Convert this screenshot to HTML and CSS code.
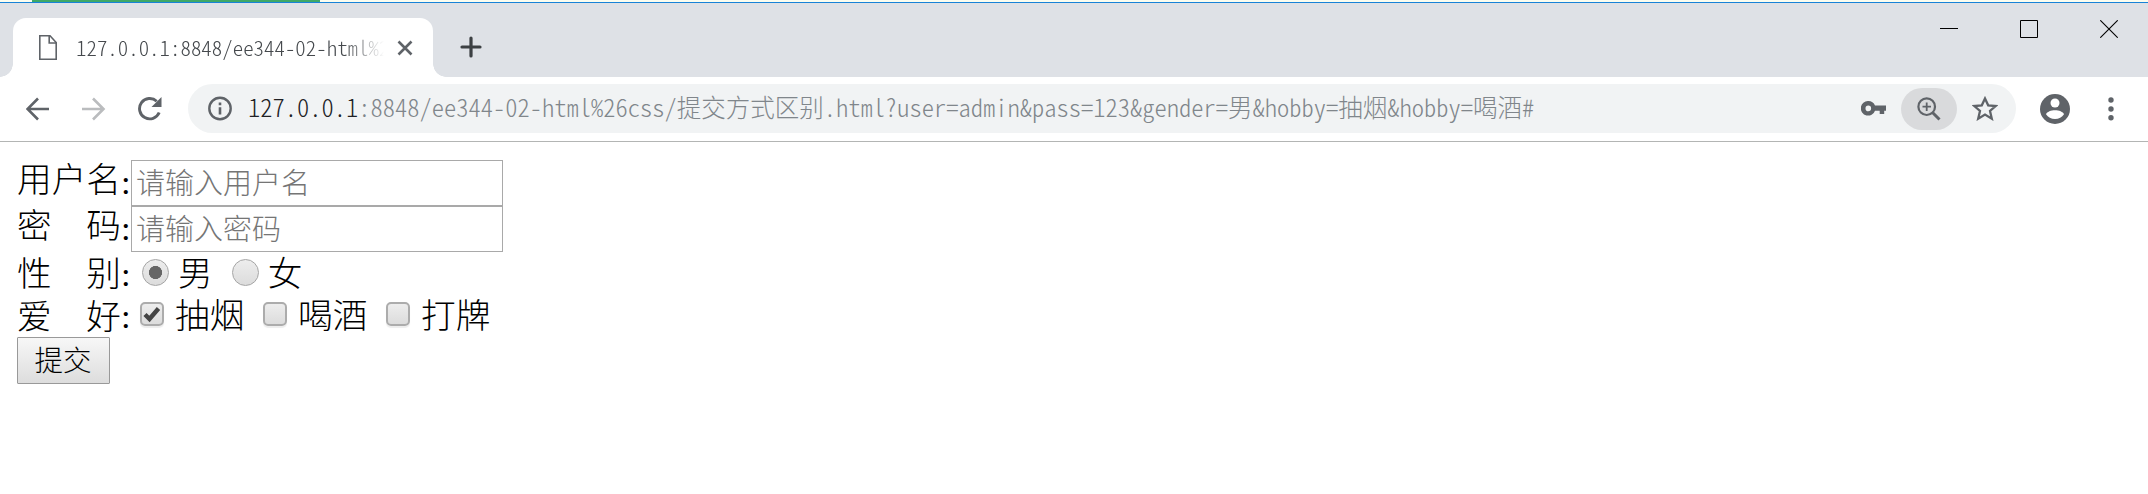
FILE: index.html
```html
<!DOCTYPE html>
<html lang="zh-CN">
<head>
<meta charset="utf-8">
<title>提交方式区别</title>
<link rel="stylesheet" href="styles.css">
</head>
<body>
<div class="backdrop"><div class="backdrop-accent"></div></div>
<header class="titlebar">
  <div class="tab">
    <svg class="tab-page" width="18" height="25" viewBox="0 0 18 25" fill="none" stroke="#5f6368" stroke-width="1.6"><path d="M.8.8H11L17.2 7.500V24.200H.8Z"/><path d="M10.200 1V8H17"/></svg>
    <span class="tab-title">127.0.0.1:8848/ee344-02-html%2</span>
    <svg class="tab-close" width="16" height="16" viewBox="0 0 16 16" stroke="#5f6368" stroke-width="2.600"><path d="M1.500 1.500 14.500 14.500M14.500 1.500 1.500 14.500"/></svg>
  </div>
  <svg class="new-tab" width="22" height="22" viewBox="0 0 22 22" stroke="#3c4043" stroke-width="3.200" stroke-linecap="round"><path d="M11 2V20M2 11H20"/></svg>
  <div class="window-buttons">
    <svg width="18" height="18" viewBox="0 0 18 18" stroke="#000"><path d="M0 8.500H18"/></svg>
    <svg width="18" height="18" viewBox="0 0 18 18" stroke="#000" fill="none"><path d="M.5.5H17.500V17.500H.5Z"/></svg>
    <svg width="18" height="18" viewBox="0 0 18 18" stroke="#000" stroke-width="1.100"><path d="M.3.3 17.700 17.700M17.700.3.3 17.700"/></svg>
  </div>
</header>
<nav class="toolbar">
  <svg class="back" width="24" height="24" viewBox="0 0 24 24" fill="none" stroke="#5f6368" stroke-width="2.600"><path d="M23 12H2M12 1.500 1.500 12 12 22.500"/></svg>
  <svg class="forward" width="24" height="24" viewBox="0 0 24 24" fill="none" stroke="#babcbe" stroke-width="2.600"><path d="M0 12H21M11 1.500 21.500 12 11 22.500"/></svg>
  <svg class="reload" width="26" height="25" viewBox="0 0 26 25"><path d="M22.200 16.500A10.200 10.200 0 1 1 19.700 5.200" fill="none" stroke="#5f6368" stroke-width="2.900"/><path d="M24.500 1V11H14.500Z" fill="#5f6368"/></svg>
  <div class="omnibox">
    <svg class="info" width="25" height="25" viewBox="0 0 25 25"><circle cx="12" cy="12.500" r="10.700" fill="none" stroke="#5f6368" stroke-width="2.400"/><path d="M10.700 11.300H13.300V18.500H10.700ZM10.700 6.500H13.300V9.200H10.700Z" fill="#5f6368"/></svg>
    <span class="url"><span class="host">127.0.0.1</span>:8848/ee344-02-html%26css/提交方式区别.html?user=admin&amp;pass=123&amp;gender=男&amp;hobby=抽烟&amp;hobby=喝酒#</span>
    <svg class="key" width="25" height="15" viewBox="0 0 25 15"><path d="M7.300 0A7.300 7.300 0 0 1 14 4.600H25V9.700H23.200V13H18.700V9.700H14A7.300 7.300 0 1 1 7.300 0ZM7.300 4.600A2.800 2.800 0 1 0 7.300 10.200 2.800 2.800 0 0 0 7.300 4.600Z" fill="#5f6368"/></svg>
    <div class="zoom-chip"><svg width="24" height="24" viewBox="0 0 24 24" fill="none" stroke="#5f6368"><circle cx="9.700" cy="9.700" r="8.300" stroke-width="2.200"/><path d="M9.700 5.500V14M5.500 9.700H14" stroke-width="1.800"/><path d="M15.500 15.500 22.500 22.500" stroke-width="3"/></svg></div>
    <svg class="star" width="26" height="25" viewBox="0 0 26 25" fill="none" stroke="#5f6368" stroke-width="2.300"><path d="M13 2.500 16.200 9.300 23.700 10 18 15 19.800 22.700 13 18.600 6.200 22.700 8 15 2.300 10 9.800 9.300Z"/></svg>
  </div>
  <svg class="avatar" width="30" height="30" viewBox="0 0 30 30"><circle cx="15" cy="15" r="15" fill="#5f6368"/><circle cx="15" cy="9" r="4.500" fill="#fff"/><path d="M6 20.300C7 17.800 11 16.300 15 16.300S23 17.800 24 20.300C22 23.300 18.800 25 15 25S8 23.300 6 20.300Z" fill="#fff"/></svg>
  <svg class="menu" width="6" height="24" viewBox="0 0 6 24" fill="#5f6368"><circle cx="3" cy="3" r="2.700"/><circle cx="3" cy="12" r="2.700"/><circle cx="3" cy="20.800" r="2.700"/></svg>
</nav>
<form class="form">
  <div class="row field-row"><span class="label"><i>用</i><i>户</i><i>名</i></span><span class="colon">:</span><input class="field" type="text" placeholder="请输入用户名"></div>
  <div class="row field-row"><span class="label"><i>密</i><i>码</i></span><span class="colon">:</span><input class="field" type="password" placeholder="请输入密码"></div>
  <div class="row gender-row"><span class="label"><i>性</i><i>别</i></span><span class="colon">:</span>
    <label class="choice male"><input class="radio" type="radio" name="gender" checked><span class="choice-text">男</span></label>
    <label class="choice female"><input class="radio" type="radio" name="gender"><span class="choice-text">女</span></label>
  </div>
  <div class="row hobby-row"><span class="label"><i>爱</i><i>好</i></span><span class="colon">:</span>
    <label class="choice hobby"><span class="check"><svg width="18" height="18" viewBox="0 0 18 18"><path d="M2 9.500 6.500 14 15.500 3.500" fill="none" stroke="#444" stroke-width="4.400"/></svg></span><span class="choice-text">抽烟</span></label>
    <label class="choice hobby"><span class="check"></span><span class="choice-text">喝酒</span></label>
    <label class="choice hobby"><span class="check"></span><span class="choice-text">打牌</span></label>
  </div>
  <button class="submit" type="button">提交</button>
</form>
</body>
</html>
```
FILE: styles.css
```css
* { box-sizing: border-box; }
body {
  margin: 0;
  height: 494px;
  overflow: hidden;
  background: #fff;
  color: #000;
  font-family: "Noto Sans CJK SC", sans-serif;
  font-weight: 300;
}
svg { display: block; flex: none; }

/* Strip of the window behind the browser */
.backdrop { height: 3px; background: #fbfdf0; border-bottom: 1px solid #1883d7; }
.backdrop-accent { width: 288px; height: 2px; margin-left: 32px; background: #3fa867; }

.titlebar { display: flex; height: 74px; padding-left: 13px; background: #dee1e6; }
.tab {
  position: relative;
  display: flex;
  align-items: center;
  width: 420px;
  height: 59px;
  margin-top: 15px;
  padding-left: 26px;
  border-radius: 13px 13px 0 0;
  background: #fff;
}
.tab::before, .tab::after {
  content: "";
  position: absolute;
  bottom: 0;
  width: 13px;
  height: 13px;
}
.tab::before { right: 100%; background: radial-gradient(circle at 0 0, transparent 12.5px, #fff 13px); }
.tab::after { left: 100%; background: radial-gradient(circle at 100% 0, transparent 12.5px, #fff 13px); }
.tab-title {
  width: 314px;
  margin: -2px 0 0 19px;
  white-space: nowrap;
  font-size: 20.9px;
  line-height: 30px;
  color: #45494d;
  font-feature-settings: "hwid";
  -webkit-mask-image: linear-gradient(90deg, #000 268px, transparent 308px);
  mask-image: linear-gradient(90deg, #000 268px, transparent 308px);
}
.tab-close { margin-left: 7px; }
.new-tab { margin: 33px 0 0 27px; }
.window-buttons { display: flex; gap: 62px; margin: 17px 30px 0 auto; }

.toolbar {
  display: flex;
  align-items: center;
  height: 65px;
  padding: 0 34px 1px 26px;
  border-bottom: 1px solid #b3b5b4;
}
.forward { margin-left: 32px; }
.reload { margin-left: 31px; }
.omnibox {
  display: flex;
  align-items: center;
  width: 1829px;
  height: 49px;
  margin-left: 25px;
  padding: 0 18px 0 20px;
  border-radius: 25px;
  background: #f1f3f4;
}
.url {
  margin: -3px 0 0 15px;
  white-space: nowrap;
  font-size: 24.5px;
  line-height: 36px;
  color: #80868b;
  font-feature-settings: "hwid";
}
.host { color: #202124; }
.key { margin-left: auto; }
.zoom-chip {
  display: flex;
  align-items: center;
  justify-content: center;
  width: 56px;
  height: 42px;
  margin-left: 15px;
  border-radius: 21px;
  background: #d9dadc;
}
.star { margin-left: 15px; }
.avatar { margin-left: 24px; }
.menu { margin-left: 38px; }

.form { padding: 18px 17px; font-size: 34.67px; }
.row { display: flex; align-items: center; white-space: nowrap; line-height: 36px; }
.field-row { height: 46px; }
.gender-row { height: 45px; }
.hobby-row { height: 40px; }
.label { display: flex; justify-content: space-between; width: 104px; margin-top: -12px; }
.gender-row .label { margin-top: -8px; }
.hobby-row .label { margin-top: -6px; }
.label i { font-style: normal; }
.colon { width: 10px; margin-top: -2px; font-family: "Liberation Serif", serif; }
.field {
  width: 372px;
  height: 46px;
  padding: 0 4px 5px;
  border: 1px solid #a9a9a9;
  border-radius: 0;
  background: #fff;
  font: 300 29px "Noto Sans CJK SC", sans-serif;
}
.field::placeholder { color: #757575; }
.choice { display: flex; align-items: center; }
.gender-row .choice { margin-top: -5px; }
.hobby-row .choice { margin-top: -6px; }
.choice-text { margin-top: -2px; }
.male { margin-left: 11px; }
.female { margin-left: 18px; }
.radio {
  appearance: none;
  width: 27px;
  height: 27px;
  margin: 0 9px 0 0;
  border: 1px solid #a5a5a5;
  border-radius: 50%;
  background: linear-gradient(#ededed, #dcdcdc);
}
.female { margin-left: 19px; }
.radio:checked { background: radial-gradient(circle, #666 6.3px, transparent 6.8px), linear-gradient(#ededed, #dcdcdc); }
.check {
  display: flex;
  align-items: center;
  justify-content: center;
  width: 24px;
  height: 24px;
  margin-right: 11px;
  border: 2px solid #acacac;
  border-radius: 5px;
  background: linear-gradient(#ededed, #dcdcdc);
  box-shadow: 0 2px 1px #ededed;
}
.hobby { width: 123px; }
.hobby:nth-of-type(1) { margin-left: 9px; }
.submit {
  display: block;
  width: 93px;
  height: 47px;
  padding: 0 1px 5px 0;
  border: 1px solid #999;
  border-radius: 1px;
  background: linear-gradient(#f7f7f7, #ddd);
  color: #000;
  font: 300 28.5px "Noto Sans CJK SC", sans-serif;
}
```
